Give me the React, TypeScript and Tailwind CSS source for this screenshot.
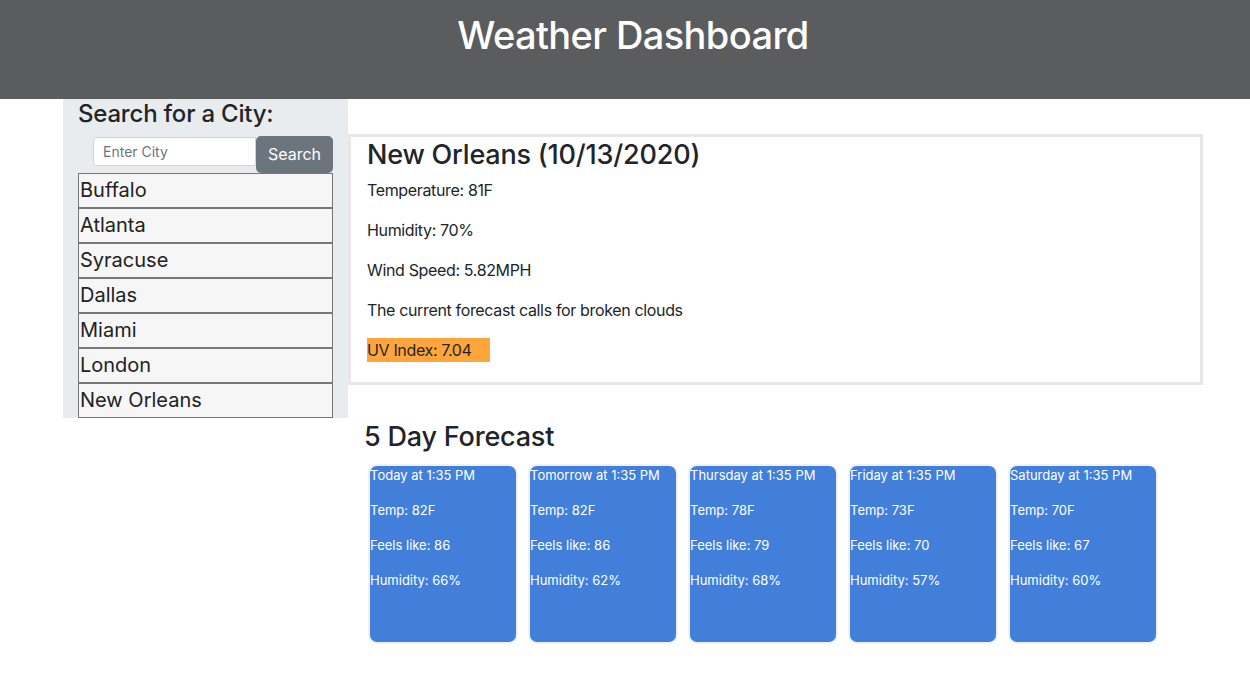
import React from "react";

const cities = ["Buffalo", "Atlanta", "Syracuse", "Dallas", "Miami", "London", "New Orleans"];

const forecast = [
  { day: "Today at 1:35 PM", temp: "82F", feels: "86", hum: "66%" },
  { day: "Tomorrow at 1:35 PM", temp: "82F", feels: "86", hum: "62%" },
  { day: "Thursday at 1:35 PM", temp: "78F", feels: "79", hum: "68%" },
  { day: "Friday at 1:35 PM", temp: "73F", feels: "70", hum: "57%" },
  { day: "Saturday at 1:35 PM", temp: "70F", feels: "67", hum: "60%" },
];

export default function App() {
  return (
    <div className="min-h-[676px] bg-white text-[#212529] font-['Inter','Liberation_Sans',sans-serif]">
      <header className="h-[99px] bg-[#5b5c5e] flex justify-center pl-4">
        <h1 className="mt-[12px] text-[38px] leading-[1.25] font-medium text-white tracking-[-0.6px]">
          Weather Dashboard
        </h1>
      </header>

      <div className="flex pl-[63px]">
        {/* sidebar */}
        <aside className="w-[285px] bg-[#e9ecef] px-[15px] self-start">
          <h4 className="text-[24px] leading-[1.2] font-medium mb-[7px] mt-[1px] tracking-[-0.2px]">Search for a City:</h4>
          <div className="flex items-start pl-[15px]">
            <input
              className="mt-[1px] w-[163px] h-[29px] bg-white border border-[#ced4da] rounded-l-[4px] px-[9px] text-[14px] placeholder:text-[#6c757d] outline-none"
              placeholder="Enter City"
            />
            <button className="w-[77px] h-[37px] bg-[#6c757d] text-white text-[16px] rounded-[5px]">Search</button>
          </div>
          <ul>
            {cities.map((c) => (
              <li
                key={c}
                className="h-[35px] bg-[#f6f6f6] border border-[#777] px-[1px] text-[20px] leading-[33px] text-[#222]"
              >
                {c}
              </li>
            ))}
          </ul>
        </aside>

        {/* main */}
        <main className="w-[855px]">
          <div className="mt-[35px] border-[3px] border-[#e8e6e6] px-4 text-[16px] leading-[24px] tracking-[-0.35px]">
            <h3 className="text-[27px] leading-[1.25] font-medium mb-[6px] mt-[1px] tracking-[-0.2px]">New Orleans (10/13/2020)</h3>
            <p className="mb-4">Temperature: 81F</p>
            <p className="mb-4">Humidity: 70%</p>
            <p className="mb-4">Wind Speed: 5.82MPH</p>
            <p className="mb-4">The current forecast calls for broken clouds</p>
            <p className="mb-[20px]">
              <span className="inline-block w-[123px] bg-[#ffa53b]">UV Index: 7.04</span>
            </p>
          </div>

          <div className="pl-4 mt-[35px]">
            <h3 className="text-[27px] leading-[1.25] font-medium mb-[10px] tracking-[-0.2px]">5 Day Forecast</h3>
            <div className="flex gap-[10px] pl-[4px]">
              {forecast.map((f) => (
                <div
                  key={f.day}
                  className="w-[150px] h-[180px] border-2 border-[#f1f1f1] rounded-[9px] bg-[#427fdb] text-white text-[13px] leading-[19px]"
                >
                  <p className="mb-4">{f.day}</p>
                  <p className="mb-4">Temp: {f.temp}</p>
                  <p className="mb-4">Feels like: {f.feels}</p>
                  <p>Humidity: {f.hum}</p>
                </div>
              ))}
            </div>
          </div>
        </main>
      </div>
    </div>
  );
}
